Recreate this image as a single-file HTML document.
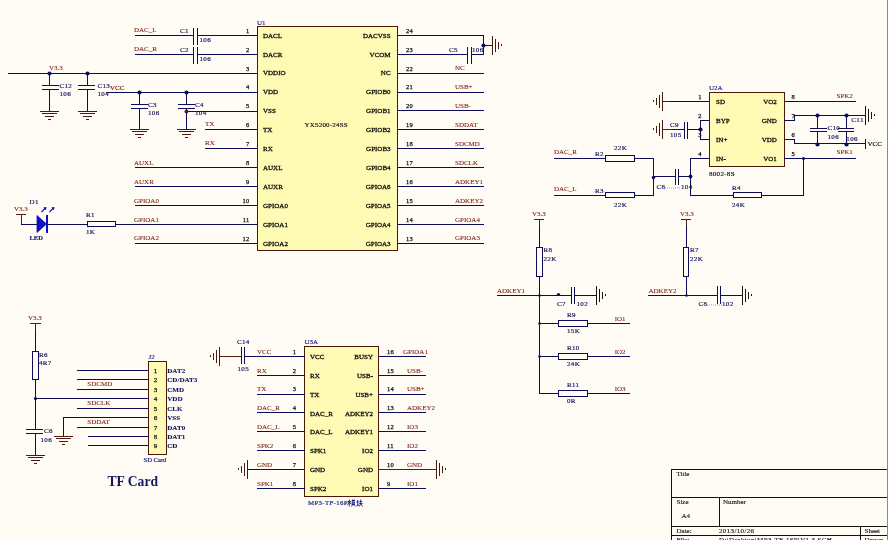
<!DOCTYPE html>
<html><head><meta charset="utf-8"><style>
html,body{margin:0;padding:0;background:#fffcf5;width:889px;height:540px;overflow:hidden}
svg{display:block;will-change:transform}
</style></head><body>
<svg width="889" height="540" viewBox="0 0 889 540" shape-rendering="auto">
<rect width="889" height="540" fill="#fffcf5"/>
<rect x="257" y="26" width="141" height="225" fill="#fffab4"/>
<rect x="257" y="26" width="141" height="1" fill="#4a1a08"/>
<rect x="257" y="250" width="141" height="1" fill="#4a1a08"/>
<rect x="257" y="26" width="1" height="225" fill="#4a1a08"/>
<rect x="397" y="26" width="1" height="225" fill="#4a1a08"/>
<text x="257" y="24.5" fill="#1a1a80" font-family='"Liberation Serif", serif' font-size="7" text-anchor="start" font-weight="normal" stroke="#1a1a80" stroke-width="0.15" >U1</text>
<text x="304.5" y="126.8" fill="#111" font-family='"Liberation Serif", serif' font-size="7" text-anchor="start" font-weight="normal" stroke="#111" stroke-width="0.18" letter-spacing="0.2">YX5200-24SS</text>
<text x="263" y="37.599999999999994" fill="#111" font-family='"Liberation Serif", serif' font-size="7" text-anchor="start" font-weight="normal" stroke="#111" stroke-width="0.3" >DACL</text>
<text x="390.6" y="37.599999999999994" fill="#111" font-family='"Liberation Serif", serif' font-size="7" text-anchor="end" font-weight="normal" stroke="#111" stroke-width="0.3" >DACVSS</text>
<text x="249.5" y="32.699999999999996" fill="#111" font-family='"Liberation Serif", serif' font-size="6.5" text-anchor="end" font-weight="normal" stroke="#111" stroke-width="0.25" letter-spacing="0.3">1</text>
<text x="406" y="32.699999999999996" fill="#111" font-family='"Liberation Serif", serif' font-size="6.5" text-anchor="start" font-weight="normal" stroke="#111" stroke-width="0.25" letter-spacing="0.3">24</text>
<text x="263" y="56.49999999999999" fill="#111" font-family='"Liberation Serif", serif' font-size="7" text-anchor="start" font-weight="normal" stroke="#111" stroke-width="0.3" >DACR</text>
<text x="390.6" y="56.49999999999999" fill="#111" font-family='"Liberation Serif", serif' font-size="7" text-anchor="end" font-weight="normal" stroke="#111" stroke-width="0.3" >VCOM</text>
<text x="249.5" y="51.599999999999994" fill="#111" font-family='"Liberation Serif", serif' font-size="6.5" text-anchor="end" font-weight="normal" stroke="#111" stroke-width="0.25" letter-spacing="0.3">2</text>
<text x="406" y="51.599999999999994" fill="#111" font-family='"Liberation Serif", serif' font-size="6.5" text-anchor="start" font-weight="normal" stroke="#111" stroke-width="0.25" letter-spacing="0.3">23</text>
<text x="263" y="75.39999999999999" fill="#111" font-family='"Liberation Serif", serif' font-size="7" text-anchor="start" font-weight="normal" stroke="#111" stroke-width="0.3" >VDDIO</text>
<text x="390.6" y="75.39999999999999" fill="#111" font-family='"Liberation Serif", serif' font-size="7" text-anchor="end" font-weight="normal" stroke="#111" stroke-width="0.3" >NC</text>
<text x="249.5" y="70.5" fill="#111" font-family='"Liberation Serif", serif' font-size="6.5" text-anchor="end" font-weight="normal" stroke="#111" stroke-width="0.25" letter-spacing="0.3">3</text>
<text x="406" y="70.5" fill="#111" font-family='"Liberation Serif", serif' font-size="6.5" text-anchor="start" font-weight="normal" stroke="#111" stroke-width="0.25" letter-spacing="0.3">22</text>
<text x="263" y="94.3" fill="#111" font-family='"Liberation Serif", serif' font-size="7" text-anchor="start" font-weight="normal" stroke="#111" stroke-width="0.3" >VDD</text>
<text x="390.6" y="94.3" fill="#111" font-family='"Liberation Serif", serif' font-size="7" text-anchor="end" font-weight="normal" stroke="#111" stroke-width="0.3" >GPIOB0</text>
<text x="249.5" y="89.4" fill="#111" font-family='"Liberation Serif", serif' font-size="6.5" text-anchor="end" font-weight="normal" stroke="#111" stroke-width="0.25" letter-spacing="0.3">4</text>
<text x="406" y="89.4" fill="#111" font-family='"Liberation Serif", serif' font-size="6.5" text-anchor="start" font-weight="normal" stroke="#111" stroke-width="0.25" letter-spacing="0.3">21</text>
<text x="263" y="113.19999999999999" fill="#111" font-family='"Liberation Serif", serif' font-size="7" text-anchor="start" font-weight="normal" stroke="#111" stroke-width="0.3" >VSS</text>
<text x="390.6" y="113.19999999999999" fill="#111" font-family='"Liberation Serif", serif' font-size="7" text-anchor="end" font-weight="normal" stroke="#111" stroke-width="0.3" >GPIOB1</text>
<text x="249.5" y="108.3" fill="#111" font-family='"Liberation Serif", serif' font-size="6.5" text-anchor="end" font-weight="normal" stroke="#111" stroke-width="0.25" letter-spacing="0.3">5</text>
<text x="406" y="108.3" fill="#111" font-family='"Liberation Serif", serif' font-size="6.5" text-anchor="start" font-weight="normal" stroke="#111" stroke-width="0.25" letter-spacing="0.3">20</text>
<text x="263" y="132.10000000000002" fill="#111" font-family='"Liberation Serif", serif' font-size="7" text-anchor="start" font-weight="normal" stroke="#111" stroke-width="0.3" >TX</text>
<text x="390.6" y="132.10000000000002" fill="#111" font-family='"Liberation Serif", serif' font-size="7" text-anchor="end" font-weight="normal" stroke="#111" stroke-width="0.3" >GPIOB2</text>
<text x="249.5" y="127.20000000000002" fill="#111" font-family='"Liberation Serif", serif' font-size="6.5" text-anchor="end" font-weight="normal" stroke="#111" stroke-width="0.25" letter-spacing="0.3">6</text>
<text x="406" y="127.20000000000002" fill="#111" font-family='"Liberation Serif", serif' font-size="6.5" text-anchor="start" font-weight="normal" stroke="#111" stroke-width="0.25" letter-spacing="0.3">19</text>
<text x="263" y="151.0" fill="#111" font-family='"Liberation Serif", serif' font-size="7" text-anchor="start" font-weight="normal" stroke="#111" stroke-width="0.3" >RX</text>
<text x="390.6" y="151.0" fill="#111" font-family='"Liberation Serif", serif' font-size="7" text-anchor="end" font-weight="normal" stroke="#111" stroke-width="0.3" >GPIOB3</text>
<text x="249.5" y="146.1" fill="#111" font-family='"Liberation Serif", serif' font-size="6.5" text-anchor="end" font-weight="normal" stroke="#111" stroke-width="0.25" letter-spacing="0.3">7</text>
<text x="406" y="146.1" fill="#111" font-family='"Liberation Serif", serif' font-size="6.5" text-anchor="start" font-weight="normal" stroke="#111" stroke-width="0.25" letter-spacing="0.3">18</text>
<text x="263" y="169.89999999999998" fill="#111" font-family='"Liberation Serif", serif' font-size="7" text-anchor="start" font-weight="normal" stroke="#111" stroke-width="0.3" >AUXL</text>
<text x="390.6" y="169.89999999999998" fill="#111" font-family='"Liberation Serif", serif' font-size="7" text-anchor="end" font-weight="normal" stroke="#111" stroke-width="0.3" >GPIOB4</text>
<text x="249.5" y="164.99999999999997" fill="#111" font-family='"Liberation Serif", serif' font-size="6.5" text-anchor="end" font-weight="normal" stroke="#111" stroke-width="0.25" letter-spacing="0.3">8</text>
<text x="406" y="164.99999999999997" fill="#111" font-family='"Liberation Serif", serif' font-size="6.5" text-anchor="start" font-weight="normal" stroke="#111" stroke-width="0.25" letter-spacing="0.3">17</text>
<text x="263" y="188.8" fill="#111" font-family='"Liberation Serif", serif' font-size="7" text-anchor="start" font-weight="normal" stroke="#111" stroke-width="0.3" >AUXR</text>
<text x="390.6" y="188.8" fill="#111" font-family='"Liberation Serif", serif' font-size="7" text-anchor="end" font-weight="normal" stroke="#111" stroke-width="0.3" >GPIOA6</text>
<text x="249.5" y="183.9" fill="#111" font-family='"Liberation Serif", serif' font-size="6.5" text-anchor="end" font-weight="normal" stroke="#111" stroke-width="0.25" letter-spacing="0.3">9</text>
<text x="406" y="183.9" fill="#111" font-family='"Liberation Serif", serif' font-size="6.5" text-anchor="start" font-weight="normal" stroke="#111" stroke-width="0.25" letter-spacing="0.3">16</text>
<text x="263" y="207.7" fill="#111" font-family='"Liberation Serif", serif' font-size="7" text-anchor="start" font-weight="normal" stroke="#111" stroke-width="0.3" >GPIOA0</text>
<text x="390.6" y="207.7" fill="#111" font-family='"Liberation Serif", serif' font-size="7" text-anchor="end" font-weight="normal" stroke="#111" stroke-width="0.3" >GPIOA5</text>
<text x="249.5" y="202.79999999999998" fill="#111" font-family='"Liberation Serif", serif' font-size="6.5" text-anchor="end" font-weight="normal" stroke="#111" stroke-width="0.25" letter-spacing="0.3">10</text>
<text x="406" y="202.79999999999998" fill="#111" font-family='"Liberation Serif", serif' font-size="6.5" text-anchor="start" font-weight="normal" stroke="#111" stroke-width="0.25" letter-spacing="0.3">15</text>
<text x="263" y="226.60000000000002" fill="#111" font-family='"Liberation Serif", serif' font-size="7" text-anchor="start" font-weight="normal" stroke="#111" stroke-width="0.3" >GPIOA1</text>
<text x="390.6" y="226.60000000000002" fill="#111" font-family='"Liberation Serif", serif' font-size="7" text-anchor="end" font-weight="normal" stroke="#111" stroke-width="0.3" >GPIOA4</text>
<text x="249.5" y="221.70000000000002" fill="#111" font-family='"Liberation Serif", serif' font-size="6.5" text-anchor="end" font-weight="normal" stroke="#111" stroke-width="0.25" letter-spacing="0.3">11</text>
<text x="406" y="221.70000000000002" fill="#111" font-family='"Liberation Serif", serif' font-size="6.5" text-anchor="start" font-weight="normal" stroke="#111" stroke-width="0.25" letter-spacing="0.3">14</text>
<text x="263" y="245.5" fill="#111" font-family='"Liberation Serif", serif' font-size="7" text-anchor="start" font-weight="normal" stroke="#111" stroke-width="0.3" >GPIOA2</text>
<text x="390.6" y="245.5" fill="#111" font-family='"Liberation Serif", serif' font-size="7" text-anchor="end" font-weight="normal" stroke="#111" stroke-width="0.3" >GPIOA3</text>
<text x="249.5" y="240.6" fill="#111" font-family='"Liberation Serif", serif' font-size="6.5" text-anchor="end" font-weight="normal" stroke="#111" stroke-width="0.25" letter-spacing="0.3">12</text>
<text x="406" y="240.6" fill="#111" font-family='"Liberation Serif", serif' font-size="6.5" text-anchor="start" font-weight="normal" stroke="#111" stroke-width="0.25" letter-spacing="0.3">13</text>
<rect x="197" y="35" width="61" height="1" fill="#0c0c5a"/>
<rect x="135" y="35" width="59" height="1" fill="#0c0c5a"/>
<rect x="197" y="54" width="61" height="1" fill="#0c0c5a"/>
<rect x="135" y="54" width="59" height="1" fill="#0c0c5a"/>
<rect x="8" y="73" width="250" height="1" fill="#0c0c5a"/>
<rect x="106" y="92" width="152" height="1" fill="#0c0c5a"/>
<rect x="186" y="111" width="72" height="1" fill="#0c0c5a"/>
<rect x="205" y="129" width="53" height="1" fill="#0c0c5a"/>
<rect x="205" y="148" width="53" height="1" fill="#0c0c5a"/>
<rect x="135" y="167" width="123" height="1" fill="#0c0c5a"/>
<text x="134" y="164.79999999999998" fill="#7a1a0a" font-family='"Liberation Serif", serif' font-size="7" text-anchor="start" font-weight="normal" stroke="#7a1a0a" stroke-width="0.2" stroke-opacity="0.4">AUXL</text>
<rect x="135" y="186" width="123" height="1" fill="#0c0c5a"/>
<text x="134" y="183.70000000000002" fill="#7a1a0a" font-family='"Liberation Serif", serif' font-size="7" text-anchor="start" font-weight="normal" stroke="#7a1a0a" stroke-width="0.2" stroke-opacity="0.4">AUXR</text>
<rect x="135" y="205" width="123" height="1" fill="#0c0c5a"/>
<text x="134" y="202.6" fill="#7a1a0a" font-family='"Liberation Serif", serif' font-size="7" text-anchor="start" font-weight="normal" stroke="#7a1a0a" stroke-width="0.2" stroke-opacity="0.4">GPIOA0</text>
<rect x="135" y="224" width="123" height="1" fill="#0c0c5a"/>
<text x="134" y="221.50000000000003" fill="#7a1a0a" font-family='"Liberation Serif", serif' font-size="7" text-anchor="start" font-weight="normal" stroke="#7a1a0a" stroke-width="0.2" stroke-opacity="0.4">GPIOA1</text>
<rect x="135" y="243" width="123" height="1" fill="#0c0c5a"/>
<text x="134" y="240.4" fill="#7a1a0a" font-family='"Liberation Serif", serif' font-size="7" text-anchor="start" font-weight="normal" stroke="#7a1a0a" stroke-width="0.2" stroke-opacity="0.4">GPIOA2</text>
<text x="134" y="32.4" fill="#7a1a0a" font-family='"Liberation Serif", serif' font-size="7" text-anchor="start" font-weight="normal" stroke="#7a1a0a" stroke-width="0.2" stroke-opacity="0.4">DAC_L</text>
<text x="134" y="51.4" fill="#7a1a0a" font-family='"Liberation Serif", serif' font-size="7" text-anchor="start" font-weight="normal" stroke="#7a1a0a" stroke-width="0.2" stroke-opacity="0.4">DAC_R</text>
<rect x="193" y="28" width="1" height="17" fill="#0c0c5a"/>
<rect x="197" y="28" width="1" height="17" fill="#0c0c5a"/>
<rect x="193" y="47" width="1" height="17" fill="#0c0c5a"/>
<rect x="197" y="47" width="1" height="17" fill="#0c0c5a"/>
<text x="180" y="32.6" fill="#16165c" font-family='"Liberation Serif", serif' font-size="7" text-anchor="start" font-weight="normal" stroke="#16165c" stroke-width="0.18" letter-spacing="0.35">C1</text>
<text x="199.5" y="41.6" fill="#16165c" font-family='"Liberation Serif", serif' font-size="7" text-anchor="start" font-weight="normal" stroke="#16165c" stroke-width="0.18" letter-spacing="0.35">106</text>
<text x="180" y="51.6" fill="#16165c" font-family='"Liberation Serif", serif' font-size="7" text-anchor="start" font-weight="normal" stroke="#16165c" stroke-width="0.18" letter-spacing="0.35">C2</text>
<text x="199.5" y="60.6" fill="#16165c" font-family='"Liberation Serif", serif' font-size="7" text-anchor="start" font-weight="normal" stroke="#16165c" stroke-width="0.18" letter-spacing="0.35">106</text>
<text x="205" y="126.4" fill="#7a1a0a" font-family='"Liberation Serif", serif' font-size="7" text-anchor="start" font-weight="normal" stroke="#7a1a0a" stroke-width="0.2" stroke-opacity="0.4">TX</text>
<text x="205" y="145.4" fill="#7a1a0a" font-family='"Liberation Serif", serif' font-size="7" text-anchor="start" font-weight="normal" stroke="#7a1a0a" stroke-width="0.2" stroke-opacity="0.4">RX</text>
<text x="49" y="70.2" fill="#7a1a0a" font-family='"Liberation Serif", serif' font-size="7" text-anchor="start" font-weight="normal" stroke="#7a1a0a" stroke-width="0.2" stroke-opacity="0.4">V3.3</text>
<circle cx="49.5" cy="73.5" r="2.1" fill="#0c0c5a"/>
<rect x="49" y="73" width="1" height="13" fill="#0c0c5a"/>
<rect x="42" y="85" width="17" height="1" fill="#0c0c5a"/>
<rect x="42" y="89" width="17" height="1" fill="#0c0c5a"/>
<rect x="49" y="89" width="1" height="23" fill="#0c0c5a"/>
<rect x="40" y="111" width="19" height="1" fill="#4a1a10"/>
<rect x="42" y="113" width="15" height="1" fill="#4a1a10"/>
<rect x="45" y="116" width="9" height="1" fill="#4a1a10"/>
<rect x="48" y="119" width="3" height="1" fill="#4a1a10"/>
<text x="59.5" y="87.6" fill="#16165c" font-family='"Liberation Serif", serif' font-size="7" text-anchor="start" font-weight="normal" stroke="#16165c" stroke-width="0.18" letter-spacing="0.35">C12</text>
<text x="59.5" y="95.8" fill="#16165c" font-family='"Liberation Serif", serif' font-size="7" text-anchor="start" font-weight="normal" stroke="#16165c" stroke-width="0.18" letter-spacing="0.35">106</text>
<circle cx="87.5" cy="73.5" r="2.1" fill="#0c0c5a"/>
<rect x="87" y="73" width="1" height="13" fill="#0c0c5a"/>
<rect x="78" y="85" width="17" height="1" fill="#0c0c5a"/>
<rect x="78" y="89" width="17" height="1" fill="#0c0c5a"/>
<rect x="87" y="89" width="1" height="23" fill="#0c0c5a"/>
<rect x="78" y="111" width="19" height="1" fill="#4a1a10"/>
<rect x="80" y="113" width="15" height="1" fill="#4a1a10"/>
<rect x="83" y="116" width="9" height="1" fill="#4a1a10"/>
<rect x="86" y="119" width="3" height="1" fill="#4a1a10"/>
<text x="97.5" y="87.6" fill="#16165c" font-family='"Liberation Serif", serif' font-size="7" text-anchor="start" font-weight="normal" stroke="#16165c" stroke-width="0.18" letter-spacing="0.35">C13</text>
<text x="97.5" y="95.8" fill="#16165c" font-family='"Liberation Serif", serif' font-size="7" text-anchor="start" font-weight="normal" stroke="#16165c" stroke-width="0.18" letter-spacing="0.35">104</text>
<text x="110" y="90" fill="#7a1a0a" font-family='"Liberation Serif", serif' font-size="7" text-anchor="start" font-weight="normal" stroke="#7a1a0a" stroke-width="0.2" >VCC</text>
<circle cx="139.5" cy="92.5" r="2.1" fill="#0c0c5a"/>
<rect x="139" y="92" width="1" height="13" fill="#0c0c5a"/>
<rect x="131" y="104" width="17" height="1" fill="#0c0c5a"/>
<rect x="131" y="108" width="17" height="1" fill="#0c0c5a"/>
<rect x="139" y="108" width="1" height="22" fill="#0c0c5a"/>
<rect x="130" y="129" width="19" height="1" fill="#4a1a10"/>
<rect x="132" y="131" width="15" height="1" fill="#4a1a10"/>
<rect x="135" y="134" width="9" height="1" fill="#4a1a10"/>
<rect x="138" y="137" width="3" height="1" fill="#4a1a10"/>
<text x="148" y="106.6" fill="#16165c" font-family='"Liberation Serif", serif' font-size="7" text-anchor="start" font-weight="normal" stroke="#16165c" stroke-width="0.18" letter-spacing="0.35">C3</text>
<text x="148" y="114.6" fill="#16165c" font-family='"Liberation Serif", serif' font-size="7" text-anchor="start" font-weight="normal" stroke="#16165c" stroke-width="0.18" letter-spacing="0.35">106</text>
<circle cx="186.5" cy="92.5" r="2.1" fill="#0c0c5a"/>
<rect x="186" y="92" width="1" height="13" fill="#0c0c5a"/>
<rect x="178" y="104" width="17" height="1" fill="#0c0c5a"/>
<rect x="178" y="108" width="17" height="1" fill="#0c0c5a"/>
<rect x="186" y="108" width="1" height="22" fill="#0c0c5a"/>
<rect x="177" y="129" width="19" height="1" fill="#4a1a10"/>
<rect x="179" y="131" width="15" height="1" fill="#4a1a10"/>
<rect x="182" y="134" width="9" height="1" fill="#4a1a10"/>
<rect x="185" y="137" width="3" height="1" fill="#4a1a10"/>
<text x="195" y="106.6" fill="#16165c" font-family='"Liberation Serif", serif' font-size="7" text-anchor="start" font-weight="normal" stroke="#16165c" stroke-width="0.18" letter-spacing="0.35">C4</text>
<text x="195" y="114.6" fill="#16165c" font-family='"Liberation Serif", serif' font-size="7" text-anchor="start" font-weight="normal" stroke="#16165c" stroke-width="0.18" letter-spacing="0.35">104</text>
<circle cx="186.5" cy="111.5" r="2.0" fill="#5a1a10"/>
<rect x="397" y="35" width="87" height="1" fill="#0c0c5a"/>
<rect x="397" y="54" width="71" height="1" fill="#0c0c5a"/>
<rect x="471" y="54" width="13" height="1" fill="#0c0c5a"/>
<rect x="397" y="73" width="87" height="1" fill="#0c0c5a"/>
<rect x="397" y="92" width="87" height="1" fill="#0c0c5a"/>
<rect x="397" y="110" width="87" height="1" fill="#0c0c5a"/>
<rect x="397" y="129" width="87" height="1" fill="#0c0c5a"/>
<rect x="397" y="148" width="87" height="1" fill="#0c0c5a"/>
<rect x="397" y="167" width="87" height="1" fill="#0c0c5a"/>
<rect x="397" y="186" width="87" height="1" fill="#0c0c5a"/>
<rect x="397" y="205" width="87" height="1" fill="#0c0c5a"/>
<rect x="397" y="224" width="87" height="1" fill="#0c0c5a"/>
<rect x="397" y="243" width="87" height="1" fill="#0c0c5a"/>
<rect x="483" y="35" width="1" height="20" fill="#0c0c5a"/>
<circle cx="483.5" cy="45.5" r="2.1" fill="#0c0c5a"/>
<rect x="483" y="45" width="10" height="1" fill="#0c0c5a"/>
<rect x="492" y="36" width="1" height="19" fill="#4a1a10"/>
<rect x="495" y="39" width="1" height="13" fill="#4a1a10"/>
<rect x="498" y="42" width="1" height="7" fill="#4a1a10"/>
<rect x="501" y="44" width="1" height="2" fill="#4a1a10"/>
<rect x="467" y="47" width="1" height="17" fill="#0c0c5a"/>
<rect x="471" y="47" width="1" height="17" fill="#0c0c5a"/>
<text x="449" y="51.6" fill="#16165c" font-family='"Liberation Serif", serif' font-size="7" text-anchor="start" font-weight="normal" stroke="#16165c" stroke-width="0.18" letter-spacing="0.35">C5</text>
<text x="472" y="51.6" fill="#16165c" font-family='"Liberation Serif", serif' font-size="7" text-anchor="start" font-weight="normal" stroke="#16165c" stroke-width="0.18" letter-spacing="0.35">106</text>
<text x="455" y="70.3" fill="#7a1a0a" font-family='"Liberation Serif", serif' font-size="7" text-anchor="start" font-weight="normal" stroke="#7a1a0a" stroke-width="0.2" stroke-opacity="0.4">NC</text>
<text x="455" y="89.2" fill="#7a1a0a" font-family='"Liberation Serif", serif' font-size="7" text-anchor="start" font-weight="normal" stroke="#7a1a0a" stroke-width="0.2" stroke-opacity="0.4">USB+</text>
<text x="455" y="108.1" fill="#7a1a0a" font-family='"Liberation Serif", serif' font-size="7" text-anchor="start" font-weight="normal" stroke="#7a1a0a" stroke-width="0.2" stroke-opacity="0.4">USB-</text>
<text x="455" y="127.00000000000001" fill="#7a1a0a" font-family='"Liberation Serif", serif' font-size="7" text-anchor="start" font-weight="normal" stroke="#7a1a0a" stroke-width="0.2" stroke-opacity="0.4">SDDAT</text>
<text x="455" y="145.9" fill="#7a1a0a" font-family='"Liberation Serif", serif' font-size="7" text-anchor="start" font-weight="normal" stroke="#7a1a0a" stroke-width="0.2" stroke-opacity="0.4">SDCMD</text>
<text x="455" y="164.79999999999998" fill="#7a1a0a" font-family='"Liberation Serif", serif' font-size="7" text-anchor="start" font-weight="normal" stroke="#7a1a0a" stroke-width="0.2" stroke-opacity="0.4">SDCLK</text>
<text x="455" y="183.70000000000002" fill="#7a1a0a" font-family='"Liberation Serif", serif' font-size="7" text-anchor="start" font-weight="normal" stroke="#7a1a0a" stroke-width="0.2" stroke-opacity="0.4">ADKEY1</text>
<text x="455" y="202.6" fill="#7a1a0a" font-family='"Liberation Serif", serif' font-size="7" text-anchor="start" font-weight="normal" stroke="#7a1a0a" stroke-width="0.2" stroke-opacity="0.4">ADKEY2</text>
<text x="455" y="221.50000000000003" fill="#7a1a0a" font-family='"Liberation Serif", serif' font-size="7" text-anchor="start" font-weight="normal" stroke="#7a1a0a" stroke-width="0.2" stroke-opacity="0.4">GPIOA4</text>
<text x="455" y="240.4" fill="#7a1a0a" font-family='"Liberation Serif", serif' font-size="7" text-anchor="start" font-weight="normal" stroke="#7a1a0a" stroke-width="0.2" stroke-opacity="0.4">GPIOA3</text>
<text x="14" y="211.4" fill="#7a1a0a" font-family='"Liberation Serif", serif' font-size="7" text-anchor="start" font-weight="normal" stroke="#7a1a0a" stroke-width="0.2" stroke-opacity="0.4">V3.3</text>
<rect x="16" y="214" width="10" height="1" fill="#5a1a10"/>
<rect x="21" y="214" width="1" height="11" fill="#5a1a10"/>
<rect x="21" y="224" width="17" height="1" fill="#0c0c5a"/>
<polygon points="37,215.5 37,232.5 46.5,224" fill="#1010c0" stroke="#1010c0" stroke-width="0.8"/>
<rect x="46" y="215" width="2" height="18" fill="#1010c0"/>
<line x1="41.5" y1="212" x2="45.5" y2="208" stroke="#1010c0" stroke-width="1.1"/>
<polygon points="46.5,207 43.3,207.6 45.9,210.2" fill="#1010c0"/>
<line x1="49.5" y1="212" x2="53.5" y2="208" stroke="#1010c0" stroke-width="1.1"/>
<polygon points="54.5,207 51.3,207.6 53.9,210.2" fill="#1010c0"/>
<text x="29.5" y="203.6" fill="#16165c" font-family='"Liberation Serif", serif' font-size="7" text-anchor="start" font-weight="normal" stroke="#16165c" stroke-width="0.18" letter-spacing="0.35">D1</text>
<text x="29.5" y="240.2" fill="#1a1a80" font-family='"Liberation Serif", serif' font-size="6.5" text-anchor="start" font-weight="bold" stroke="#1a1a80" stroke-width="0.2" >LED</text>
<rect x="47" y="224" width="41" height="1" fill="#0c0c5a"/>
<rect x="87" y="221" width="29" height="1" fill="#0c0c5a"/>
<rect x="87" y="226" width="29" height="1" fill="#0c0c5a"/>
<rect x="87" y="221" width="1" height="6" fill="#0c0c5a"/>
<rect x="115" y="221" width="1" height="6" fill="#0c0c5a"/>
<rect x="115" y="224" width="143" height="1" fill="#0c0c5a"/>
<text x="86" y="217.1" fill="#16165c" font-family='"Liberation Serif", serif' font-size="7" text-anchor="start" font-weight="normal" stroke="#16165c" stroke-width="0.18" letter-spacing="0.35">R1</text>
<text x="86" y="234.1" fill="#16165c" font-family='"Liberation Serif", serif' font-size="7" text-anchor="start" font-weight="normal" stroke="#16165c" stroke-width="0.18" letter-spacing="0.35">1K</text>
<rect x="709" y="92" width="76" height="75" fill="#fffab4"/>
<rect x="709" y="92" width="76" height="1" fill="#4a1a08"/>
<rect x="709" y="166" width="76" height="1" fill="#4a1a08"/>
<rect x="709" y="92" width="1" height="75" fill="#4a1a08"/>
<rect x="784" y="92" width="1" height="75" fill="#4a1a08"/>
<text x="709" y="90" fill="#1a1a80" font-family='"Liberation Serif", serif' font-size="7" text-anchor="start" font-weight="normal" stroke="#1a1a80" stroke-width="0.15" >U2A</text>
<text x="709" y="175.5" fill="#111" font-family='"Liberation Serif", serif' font-size="7" text-anchor="start" font-weight="normal" stroke="#111" stroke-width="0.2" letter-spacing="0.3">8002-8S</text>
<text x="716" y="104.1" fill="#111" font-family='"Liberation Serif", serif' font-size="7" text-anchor="start" font-weight="normal" stroke="#111" stroke-width="0.3" >SD</text>
<text x="776.8" y="104.1" fill="#111" font-family='"Liberation Serif", serif' font-size="7" text-anchor="end" font-weight="normal" stroke="#111" stroke-width="0.3" >VO2</text>
<text x="701.5" y="98.8" fill="#111" font-family='"Liberation Serif", serif' font-size="6.5" text-anchor="end" font-weight="normal" stroke="#111" stroke-width="0.25" >1</text>
<text x="791.5" y="98.8" fill="#111" font-family='"Liberation Serif", serif' font-size="6.5" text-anchor="start" font-weight="normal" stroke="#111" stroke-width="0.25" >8</text>
<text x="716" y="123.1" fill="#111" font-family='"Liberation Serif", serif' font-size="7" text-anchor="start" font-weight="normal" stroke="#111" stroke-width="0.3" >BYP</text>
<text x="776.8" y="123.1" fill="#111" font-family='"Liberation Serif", serif' font-size="7" text-anchor="end" font-weight="normal" stroke="#111" stroke-width="0.3" >GND</text>
<text x="701.5" y="117.8" fill="#111" font-family='"Liberation Serif", serif' font-size="6.5" text-anchor="end" font-weight="normal" stroke="#111" stroke-width="0.25" >2</text>
<text x="791.5" y="117.8" fill="#111" font-family='"Liberation Serif", serif' font-size="6.5" text-anchor="start" font-weight="normal" stroke="#111" stroke-width="0.25" >7</text>
<text x="716" y="142.0" fill="#111" font-family='"Liberation Serif", serif' font-size="7" text-anchor="start" font-weight="normal" stroke="#111" stroke-width="0.3" >IN+</text>
<text x="776.8" y="142.0" fill="#111" font-family='"Liberation Serif", serif' font-size="7" text-anchor="end" font-weight="normal" stroke="#111" stroke-width="0.3" >VDD</text>
<text x="701.5" y="136.70000000000002" fill="#111" font-family='"Liberation Serif", serif' font-size="6.5" text-anchor="end" font-weight="normal" stroke="#111" stroke-width="0.25" >3</text>
<text x="791.5" y="136.70000000000002" fill="#111" font-family='"Liberation Serif", serif' font-size="6.5" text-anchor="start" font-weight="normal" stroke="#111" stroke-width="0.25" >6</text>
<text x="716" y="160.9" fill="#111" font-family='"Liberation Serif", serif' font-size="7" text-anchor="start" font-weight="normal" stroke="#111" stroke-width="0.3" >IN-</text>
<text x="776.8" y="160.9" fill="#111" font-family='"Liberation Serif", serif' font-size="7" text-anchor="end" font-weight="normal" stroke="#111" stroke-width="0.3" >VO1</text>
<text x="701.5" y="155.60000000000002" fill="#111" font-family='"Liberation Serif", serif' font-size="6.5" text-anchor="end" font-weight="normal" stroke="#111" stroke-width="0.25" >4</text>
<text x="791.5" y="155.60000000000002" fill="#111" font-family='"Liberation Serif", serif' font-size="6.5" text-anchor="start" font-weight="normal" stroke="#111" stroke-width="0.25" >5</text>
<rect x="662" y="101" width="9" height="1" fill="#5a1a10"/>
<rect x="670" y="101" width="40" height="1" fill="#0c0c5a"/>
<rect x="662" y="92" width="1" height="19" fill="#4a1a10"/>
<rect x="659" y="95" width="1" height="13" fill="#4a1a10"/>
<rect x="656" y="98" width="1" height="7" fill="#4a1a10"/>
<rect x="653" y="100" width="1" height="2" fill="#4a1a10"/>
<rect x="700" y="120" width="10" height="1" fill="#0c0c5a"/>
<rect x="700" y="120" width="1" height="20" fill="#0c0c5a"/>
<rect x="700" y="139" width="10" height="1" fill="#0c0c5a"/>
<circle cx="700.5" cy="129.5" r="2.1" fill="#0c0c5a"/>
<rect x="662" y="129" width="11" height="1" fill="#5a1a10"/>
<rect x="672" y="129" width="13" height="1" fill="#0c0c5a"/>
<rect x="662" y="120" width="1" height="19" fill="#4a1a10"/>
<rect x="659" y="123" width="1" height="13" fill="#4a1a10"/>
<rect x="656" y="126" width="1" height="7" fill="#4a1a10"/>
<rect x="653" y="128" width="1" height="2" fill="#4a1a10"/>
<rect x="684" y="122" width="1" height="17" fill="#0c0c5a"/>
<rect x="687" y="122" width="1" height="17" fill="#0c0c5a"/>
<rect x="687" y="129" width="14" height="1" fill="#0c0c5a"/>
<text x="670" y="126.6" fill="#16165c" font-family='"Liberation Serif", serif' font-size="7" text-anchor="start" font-weight="normal" stroke="#16165c" stroke-width="0.18" letter-spacing="0.35">C9</text>
<text x="670" y="136.6" fill="#16165c" font-family='"Liberation Serif", serif' font-size="7" text-anchor="start" font-weight="normal" stroke="#16165c" stroke-width="0.18" letter-spacing="0.35">105</text>
<rect x="690" y="158" width="20" height="1" fill="#0c0c5a"/>
<rect x="690" y="158" width="1" height="38" fill="#0c0c5a"/>
<rect x="690" y="195" width="44" height="1" fill="#0c0c5a"/>
<rect x="733" y="192" width="29" height="1" fill="#0c0c5a"/>
<rect x="733" y="197" width="29" height="1" fill="#0c0c5a"/>
<rect x="733" y="192" width="1" height="6" fill="#0c0c5a"/>
<rect x="761" y="192" width="1" height="6" fill="#0c0c5a"/>
<rect x="761" y="195" width="43" height="1" fill="#0c0c5a"/>
<rect x="803" y="158" width="1" height="38" fill="#0c0c5a"/>
<circle cx="803.5" cy="158.5" r="1.5" fill="#0c0c5a"/>
<circle cx="690.5" cy="176.5" r="1.9" fill="#0c0c5a"/>
<rect x="653" y="176" width="23" height="1" fill="#0c0c5a"/>
<rect x="675" y="169" width="1" height="16" fill="#0c0c5a"/>
<rect x="678" y="169" width="1" height="16" fill="#0c0c5a"/>
<rect x="678" y="176" width="13" height="1" fill="#0c0c5a"/>
<circle cx="653.5" cy="177.5" r="1.8" fill="#0c0c5a"/>
<line x1="665" y1="188" x2="681" y2="188" stroke="#b08060" stroke-width="0.8" stroke-dasharray="1,1"/>
<text x="656.5" y="188.6" fill="#16165c" font-family='"Liberation Serif", serif' font-size="7" text-anchor="start" font-weight="normal" stroke="#16165c" stroke-width="0.18" letter-spacing="0.35">C8</text>
<text x="681" y="188.6" fill="#16165c" font-family='"Liberation Serif", serif' font-size="7" text-anchor="start" font-weight="normal" stroke="#16165c" stroke-width="0.18" letter-spacing="0.35">104</text>
<text x="732" y="189.6" fill="#16165c" font-family='"Liberation Serif", serif' font-size="7" text-anchor="start" font-weight="normal" stroke="#16165c" stroke-width="0.18" letter-spacing="0.35">R4</text>
<text x="732" y="206.6" fill="#16165c" font-family='"Liberation Serif", serif' font-size="7" text-anchor="start" font-weight="normal" stroke="#16165c" stroke-width="0.18" letter-spacing="0.35">24K</text>
<rect x="554" y="158" width="52" height="1" fill="#0c0c5a"/>
<rect x="605" y="155" width="30" height="1" fill="#0c0c5a"/>
<rect x="605" y="161" width="30" height="1" fill="#0c0c5a"/>
<rect x="605" y="155" width="1" height="7" fill="#0c0c5a"/>
<rect x="634" y="155" width="1" height="7" fill="#0c0c5a"/>
<rect x="634" y="158" width="20" height="1" fill="#0c0c5a"/>
<rect x="653" y="158" width="1" height="38" fill="#0c0c5a"/>
<rect x="634" y="195" width="20" height="1" fill="#0c0c5a"/>
<rect x="554" y="195" width="52" height="1" fill="#0c0c5a"/>
<rect x="605" y="192" width="30" height="1" fill="#0c0c5a"/>
<rect x="605" y="197" width="30" height="1" fill="#0c0c5a"/>
<rect x="605" y="192" width="1" height="6" fill="#0c0c5a"/>
<rect x="634" y="192" width="1" height="6" fill="#0c0c5a"/>
<text x="554" y="154.4" fill="#7a1a0a" font-family='"Liberation Serif", serif' font-size="7" text-anchor="start" font-weight="normal" stroke="#7a1a0a" stroke-width="0.2" stroke-opacity="0.4">DAC_R</text>
<text x="554" y="191.4" fill="#7a1a0a" font-family='"Liberation Serif", serif' font-size="7" text-anchor="start" font-weight="normal" stroke="#7a1a0a" stroke-width="0.2" stroke-opacity="0.4">DAC_L</text>
<text x="595" y="156.1" fill="#16165c" font-family='"Liberation Serif", serif' font-size="7" text-anchor="start" font-weight="normal" stroke="#16165c" stroke-width="0.18" letter-spacing="0.35">R2</text>
<text x="614" y="149.6" fill="#16165c" font-family='"Liberation Serif", serif' font-size="7" text-anchor="start" font-weight="normal" stroke="#16165c" stroke-width="0.18" letter-spacing="0.35">22K</text>
<text x="595" y="193.1" fill="#16165c" font-family='"Liberation Serif", serif' font-size="7" text-anchor="start" font-weight="normal" stroke="#16165c" stroke-width="0.18" letter-spacing="0.35">R3</text>
<text x="614" y="206.6" fill="#16165c" font-family='"Liberation Serif", serif' font-size="7" text-anchor="start" font-weight="normal" stroke="#16165c" stroke-width="0.18" letter-spacing="0.35">22K</text>
<rect x="784" y="101" width="72" height="1" fill="#0c0c5a"/>
<text x="836.5" y="98.2" fill="#7a1a0a" font-family='"Liberation Serif", serif' font-size="7" text-anchor="start" font-weight="normal" stroke="#7a1a0a" stroke-width="0.2" stroke-opacity="0.4">SPK2</text>
<rect x="784" y="120" width="11" height="1" fill="#0c0c5a"/>
<rect x="794" y="115" width="1" height="6" fill="#0c0c5a"/>
<rect x="794" y="115" width="72" height="1" fill="#0c0c5a"/>
<rect x="865" y="106" width="1" height="19" fill="#141414"/>
<rect x="868" y="109" width="1" height="13" fill="#141414"/>
<rect x="871" y="112" width="1" height="7" fill="#141414"/>
<rect x="874" y="114" width="1" height="2" fill="#141414"/>
<rect x="784" y="139" width="11" height="1" fill="#0c0c5a"/>
<rect x="794" y="139" width="1" height="5" fill="#0c0c5a"/>
<rect x="794" y="143" width="72" height="1" fill="#0c0c5a"/>
<rect x="865" y="139" width="1" height="10" fill="#111"/>
<text x="867.5" y="146" fill="#111" font-family='"Liberation Serif", serif' font-size="7" text-anchor="start" font-weight="normal" stroke="#111" stroke-width="0.2" >VCC</text>
<rect x="784" y="158" width="72" height="1" fill="#0c0c5a"/>
<text x="836.5" y="154.4" fill="#7a1a0a" font-family='"Liberation Serif", serif' font-size="7" text-anchor="start" font-weight="normal" stroke="#7a1a0a" stroke-width="0.2" stroke-opacity="0.4">SPK1</text>
<circle cx="817.5" cy="115.5" r="2.1" fill="#0c0c5a"/>
<circle cx="817.5" cy="144.5" r="2.1" fill="#0c0c5a"/>
<rect x="817" y="115" width="1" height="14" fill="#0c0c5a"/>
<rect x="817" y="131" width="1" height="13" fill="#0c0c5a"/>
<rect x="810" y="128" width="17" height="1" fill="#0c0c5a"/>
<rect x="810" y="131" width="17" height="1" fill="#0c0c5a"/>
<circle cx="846.5" cy="115.5" r="2.1" fill="#0c0c5a"/>
<circle cx="846.5" cy="144.5" r="2.1" fill="#0c0c5a"/>
<rect x="846" y="115" width="1" height="14" fill="#0c0c5a"/>
<rect x="846" y="131" width="1" height="13" fill="#0c0c5a"/>
<rect x="838" y="128" width="16" height="1" fill="#0c0c5a"/>
<rect x="838" y="131" width="16" height="1" fill="#0c0c5a"/>
<text x="827.5" y="129.6" fill="#16165c" font-family='"Liberation Serif", serif' font-size="7" text-anchor="start" font-weight="normal" stroke="#16165c" stroke-width="0.18" letter-spacing="0.35">C10</text>
<text x="827.5" y="138.6" fill="#16165c" font-family='"Liberation Serif", serif' font-size="7" text-anchor="start" font-weight="normal" stroke="#16165c" stroke-width="0.18" letter-spacing="0.35">106</text>
<text x="851.3" y="121.6" fill="#16165c" font-family='"Liberation Serif", serif' font-size="7" text-anchor="start" font-weight="normal" stroke="#16165c" stroke-width="0.18" letter-spacing="0.35">C11</text>
<text x="846.3" y="140.6" fill="#16165c" font-family='"Liberation Serif", serif' font-size="7" text-anchor="start" font-weight="normal" stroke="#16165c" stroke-width="0.18" letter-spacing="0.35">106</text>
<text x="532" y="216.4" fill="#7a1a0a" font-family='"Liberation Serif", serif' font-size="7" text-anchor="start" font-weight="normal" stroke="#7a1a0a" stroke-width="0.2" stroke-opacity="0.4">V3.3</text>
<rect x="534" y="219" width="10" height="1" fill="#5a1a10"/>
<rect x="539" y="219" width="1" height="8" fill="#5a1a10"/>
<rect x="539" y="226" width="1" height="22" fill="#0c0c5a"/>
<rect x="536" y="247" width="7" height="1" fill="#0c0c5a"/>
<rect x="536" y="276" width="7" height="1" fill="#0c0c5a"/>
<rect x="536" y="247" width="1" height="30" fill="#0c0c5a"/>
<rect x="542" y="247" width="1" height="30" fill="#0c0c5a"/>
<rect x="539" y="276" width="1" height="118" fill="#0c0c5a"/>
<text x="543.5" y="252.1" fill="#16165c" font-family='"Liberation Serif", serif' font-size="7" text-anchor="start" font-weight="normal" stroke="#16165c" stroke-width="0.18" letter-spacing="0.35">R8</text>
<text x="543.5" y="260.6" fill="#16165c" font-family='"Liberation Serif", serif' font-size="7" text-anchor="start" font-weight="normal" stroke="#16165c" stroke-width="0.18" letter-spacing="0.35">22K</text>
<text x="497" y="292.59999999999997" fill="#7a1a0a" font-family='"Liberation Serif", serif' font-size="7" text-anchor="start" font-weight="normal" stroke="#7a1a0a" stroke-width="0.2" stroke-opacity="0.4">ADKEY1</text>
<rect x="497" y="295" width="75" height="1" fill="#0c0c5a"/>
<circle cx="539.5" cy="295.5" r="1.3" fill="#0c0c5a"/>
<circle cx="558.5" cy="294.5" r="1.6" fill="#0c0c5a"/>
<rect x="571" y="287" width="1" height="17" fill="#0c0c5a"/>
<rect x="574" y="287" width="1" height="17" fill="#0c0c5a"/>
<rect x="574" y="295" width="23" height="1" fill="#0c0c5a"/>
<rect x="596" y="286" width="1" height="19" fill="#141414"/>
<rect x="599" y="289" width="1" height="13" fill="#141414"/>
<rect x="602" y="292" width="1" height="7" fill="#141414"/>
<rect x="605" y="294" width="1" height="2" fill="#141414"/>
<text x="557" y="306.1" fill="#16165c" font-family='"Liberation Serif", serif' font-size="7" text-anchor="start" font-weight="normal" stroke="#16165c" stroke-width="0.18" letter-spacing="0.35">C7</text>
<text x="576.5" y="306.1" fill="#16165c" font-family='"Liberation Serif", serif' font-size="7" text-anchor="start" font-weight="normal" stroke="#16165c" stroke-width="0.18" letter-spacing="0.35">102</text>
<circle cx="539.5" cy="323.5" r="1.3" fill="#0c0c5a"/>
<rect x="539" y="323" width="20" height="1" fill="#0c0c5a"/>
<rect x="558" y="320" width="30" height="1" fill="#0c0c5a"/>
<rect x="558" y="326" width="30" height="1" fill="#0c0c5a"/>
<rect x="558" y="320" width="1" height="7" fill="#0c0c5a"/>
<rect x="587" y="320" width="1" height="7" fill="#0c0c5a"/>
<rect x="587" y="323" width="43" height="1" fill="#0c0c5a"/>
<text x="567" y="316.90000000000003" fill="#16165c" font-family='"Liberation Serif", serif' font-size="7" text-anchor="start" font-weight="normal" stroke="#16165c" stroke-width="0.18" letter-spacing="0.35">R9</text>
<text x="567" y="332.90000000000003" fill="#16165c" font-family='"Liberation Serif", serif' font-size="7" text-anchor="start" font-weight="normal" stroke="#16165c" stroke-width="0.18" letter-spacing="0.35">15K</text>
<text x="614.7" y="320.5" fill="#7a1a0a" font-family='"Liberation Serif", serif' font-size="7" text-anchor="start" font-weight="normal" stroke="#7a1a0a" stroke-width="0.2" stroke-opacity="0.4">IO1</text>
<circle cx="539.5" cy="356.5" r="1.3" fill="#0c0c5a"/>
<rect x="539" y="356" width="20" height="1" fill="#0c0c5a"/>
<rect x="558" y="353" width="30" height="1" fill="#0c0c5a"/>
<rect x="558" y="359" width="30" height="1" fill="#0c0c5a"/>
<rect x="558" y="353" width="1" height="7" fill="#0c0c5a"/>
<rect x="587" y="353" width="1" height="7" fill="#0c0c5a"/>
<rect x="587" y="356" width="43" height="1" fill="#0c0c5a"/>
<text x="567" y="349.90000000000003" fill="#16165c" font-family='"Liberation Serif", serif' font-size="7" text-anchor="start" font-weight="normal" stroke="#16165c" stroke-width="0.18" letter-spacing="0.35">R10</text>
<text x="567" y="365.90000000000003" fill="#16165c" font-family='"Liberation Serif", serif' font-size="7" text-anchor="start" font-weight="normal" stroke="#16165c" stroke-width="0.18" letter-spacing="0.35">24K</text>
<text x="614.7" y="353.5" fill="#7a1a0a" font-family='"Liberation Serif", serif' font-size="7" text-anchor="start" font-weight="normal" stroke="#7a1a0a" stroke-width="0.2" stroke-opacity="0.4">IO2</text>
<rect x="539" y="393" width="20" height="1" fill="#0c0c5a"/>
<rect x="558" y="390" width="30" height="1" fill="#0c0c5a"/>
<rect x="558" y="396" width="30" height="1" fill="#0c0c5a"/>
<rect x="558" y="390" width="1" height="7" fill="#0c0c5a"/>
<rect x="587" y="390" width="1" height="7" fill="#0c0c5a"/>
<rect x="587" y="393" width="43" height="1" fill="#0c0c5a"/>
<text x="567" y="387.40000000000003" fill="#16165c" font-family='"Liberation Serif", serif' font-size="7" text-anchor="start" font-weight="normal" stroke="#16165c" stroke-width="0.18" letter-spacing="0.35">R11</text>
<text x="567" y="403.40000000000003" fill="#16165c" font-family='"Liberation Serif", serif' font-size="7" text-anchor="start" font-weight="normal" stroke="#16165c" stroke-width="0.18" letter-spacing="0.35">0R</text>
<text x="614.7" y="391.0" fill="#7a1a0a" font-family='"Liberation Serif", serif' font-size="7" text-anchor="start" font-weight="normal" stroke="#7a1a0a" stroke-width="0.2" stroke-opacity="0.4">IO3</text>
<text x="680" y="216.4" fill="#7a1a0a" font-family='"Liberation Serif", serif' font-size="7" text-anchor="start" font-weight="normal" stroke="#7a1a0a" stroke-width="0.2" stroke-opacity="0.4">V3.3</text>
<rect x="681" y="219" width="10" height="1" fill="#5a1a10"/>
<rect x="686" y="219" width="1" height="8" fill="#5a1a10"/>
<rect x="686" y="226" width="1" height="22" fill="#0c0c5a"/>
<rect x="683" y="247" width="6" height="1" fill="#0c0c5a"/>
<rect x="683" y="276" width="6" height="1" fill="#0c0c5a"/>
<rect x="683" y="247" width="1" height="30" fill="#0c0c5a"/>
<rect x="688" y="247" width="1" height="30" fill="#0c0c5a"/>
<rect x="686" y="276" width="1" height="20" fill="#0c0c5a"/>
<text x="690" y="252.1" fill="#16165c" font-family='"Liberation Serif", serif' font-size="7" text-anchor="start" font-weight="normal" stroke="#16165c" stroke-width="0.18" letter-spacing="0.35">R7</text>
<text x="690" y="260.6" fill="#16165c" font-family='"Liberation Serif", serif' font-size="7" text-anchor="start" font-weight="normal" stroke="#16165c" stroke-width="0.18" letter-spacing="0.35">22K</text>
<text x="648.5" y="292.59999999999997" fill="#7a1a0a" font-family='"Liberation Serif", serif' font-size="7" text-anchor="start" font-weight="normal" stroke="#7a1a0a" stroke-width="0.2" stroke-opacity="0.4">ADKEY2</text>
<rect x="648" y="295" width="70" height="1" fill="#0c0c5a"/>
<circle cx="686.5" cy="295.5" r="1.3" fill="#0c0c5a"/>
<rect x="717" y="286" width="1" height="18" fill="#0c0c5a"/>
<rect x="720" y="286" width="1" height="18" fill="#0c0c5a"/>
<rect x="720" y="295" width="23" height="1" fill="#0c0c5a"/>
<rect x="742" y="286" width="1" height="19" fill="#141414"/>
<rect x="745" y="289" width="1" height="13" fill="#141414"/>
<rect x="748" y="292" width="1" height="7" fill="#141414"/>
<rect x="751" y="294" width="1" height="2" fill="#141414"/>
<text x="698.5" y="306.1" fill="#16165c" font-family='"Liberation Serif", serif' font-size="7" text-anchor="start" font-weight="normal" stroke="#16165c" stroke-width="0.18" letter-spacing="0.35">C8</text>
<text x="722" y="306.1" fill="#16165c" font-family='"Liberation Serif", serif' font-size="7" text-anchor="start" font-weight="normal" stroke="#16165c" stroke-width="0.18" letter-spacing="0.35">102</text>
<line x1="707" y1="305" x2="722" y2="305" stroke="#b08060" stroke-width="0.8" stroke-dasharray="1,1"/>
<text x="28" y="320.4" fill="#7a1a0a" font-family='"Liberation Serif", serif' font-size="7" text-anchor="start" font-weight="normal" stroke="#7a1a0a" stroke-width="0.2" stroke-opacity="0.4">V3.3</text>
<rect x="30" y="323" width="11" height="1" fill="#5a1a10"/>
<rect x="35" y="323" width="1" height="8" fill="#5a1a10"/>
<rect x="35" y="330" width="1" height="22" fill="#0c0c5a"/>
<rect x="32" y="351" width="7" height="1" fill="#0c0c5a"/>
<rect x="32" y="379" width="7" height="1" fill="#0c0c5a"/>
<rect x="32" y="351" width="1" height="29" fill="#0c0c5a"/>
<rect x="38" y="351" width="1" height="29" fill="#0c0c5a"/>
<rect x="35" y="379" width="1" height="51" fill="#0c0c5a"/>
<circle cx="35.5" cy="398.5" r="1.6" fill="#0c0c5a"/>
<rect x="26" y="429" width="17" height="1" fill="#0c0c5a"/>
<rect x="26" y="433" width="17" height="1" fill="#0c0c5a"/>
<rect x="35" y="433" width="1" height="23" fill="#0c0c5a"/>
<rect x="26" y="455" width="19" height="1" fill="#4a1a10"/>
<rect x="28" y="457" width="15" height="1" fill="#4a1a10"/>
<rect x="31" y="460" width="9" height="1" fill="#4a1a10"/>
<rect x="34" y="463" width="3" height="1" fill="#4a1a10"/>
<text x="39" y="356.6" fill="#16165c" font-family='"Liberation Serif", serif' font-size="7" text-anchor="start" font-weight="normal" stroke="#16165c" stroke-width="0.18" letter-spacing="0.35">R6</text>
<text x="39" y="365.1" fill="#16165c" font-family='"Liberation Serif", serif' font-size="7" text-anchor="start" font-weight="normal" stroke="#16165c" stroke-width="0.18" letter-spacing="0.35">4R7</text>
<text x="44" y="433.1" fill="#16165c" font-family='"Liberation Serif", serif' font-size="7" text-anchor="start" font-weight="normal" stroke="#16165c" stroke-width="0.18" letter-spacing="0.35">C6</text>
<text x="40.5" y="442.1" fill="#16165c" font-family='"Liberation Serif", serif' font-size="7" text-anchor="start" font-weight="normal" stroke="#16165c" stroke-width="0.18" letter-spacing="0.35">106</text>
<rect x="148" y="361" width="19" height="94" fill="#fffab4"/>
<rect x="148" y="361" width="19" height="1" fill="#4a1a08"/>
<rect x="148" y="454" width="19" height="1" fill="#4a1a08"/>
<rect x="148" y="361" width="1" height="94" fill="#4a1a08"/>
<rect x="166" y="361" width="1" height="94" fill="#4a1a08"/>
<text x="148.5" y="359.2" fill="#1a1a80" font-family='"Liberation Serif", serif' font-size="7" text-anchor="start" font-weight="normal" stroke="#1a1a80" stroke-width="0.15" >J2</text>
<rect x="77" y="370" width="72" height="1" fill="#0c0c5a"/>
<text x="155.5" y="373.3" fill="#111" font-family='"Liberation Serif", serif' font-size="7" text-anchor="middle" font-weight="normal" stroke="#111" stroke-width="0.25" >1</text>
<text x="167.2" y="373.20000000000005" fill="#16165c" font-family='"Liberation Serif", serif' font-size="7.1" text-anchor="start" font-weight="bold" stroke="#16165c" stroke-width="0.1" >DAT2</text>
<rect x="77" y="379" width="72" height="1" fill="#0c0c5a"/>
<text x="155.5" y="382.2" fill="#111" font-family='"Liberation Serif", serif' font-size="7" text-anchor="middle" font-weight="normal" stroke="#111" stroke-width="0.25" >2</text>
<text x="167.2" y="382.1" fill="#16165c" font-family='"Liberation Serif", serif' font-size="7.1" text-anchor="start" font-weight="bold" stroke="#16165c" stroke-width="0.1" >CD/DAT3</text>
<rect x="77" y="389" width="72" height="1" fill="#0c0c5a"/>
<text x="155.5" y="392.2" fill="#111" font-family='"Liberation Serif", serif' font-size="7" text-anchor="middle" font-weight="normal" stroke="#111" stroke-width="0.25" >3</text>
<text x="167.2" y="392.1" fill="#16165c" font-family='"Liberation Serif", serif' font-size="7.1" text-anchor="start" font-weight="bold" stroke="#16165c" stroke-width="0.1" >CMD</text>
<rect x="35" y="398" width="114" height="1" fill="#0c0c5a"/>
<text x="155.5" y="400.8" fill="#111" font-family='"Liberation Serif", serif' font-size="7" text-anchor="middle" font-weight="normal" stroke="#111" stroke-width="0.25" >4</text>
<text x="167.2" y="400.70000000000005" fill="#16165c" font-family='"Liberation Serif", serif' font-size="7.1" text-anchor="start" font-weight="bold" stroke="#16165c" stroke-width="0.1" >VDD</text>
<rect x="77" y="408" width="72" height="1" fill="#0c0c5a"/>
<text x="155.5" y="411.0" fill="#111" font-family='"Liberation Serif", serif' font-size="7" text-anchor="middle" font-weight="normal" stroke="#111" stroke-width="0.25" >5</text>
<text x="167.2" y="410.90000000000003" fill="#16165c" font-family='"Liberation Serif", serif' font-size="7.1" text-anchor="start" font-weight="bold" stroke="#16165c" stroke-width="0.1" >CLK</text>
<rect x="63" y="417" width="86" height="1" fill="#0c0c5a"/>
<text x="155.5" y="420.0" fill="#111" font-family='"Liberation Serif", serif' font-size="7" text-anchor="middle" font-weight="normal" stroke="#111" stroke-width="0.25" >6</text>
<text x="167.2" y="419.90000000000003" fill="#16165c" font-family='"Liberation Serif", serif' font-size="7.1" text-anchor="start" font-weight="bold" stroke="#16165c" stroke-width="0.1" >VSS</text>
<rect x="77" y="427" width="72" height="1" fill="#0c0c5a"/>
<text x="155.5" y="429.9" fill="#111" font-family='"Liberation Serif", serif' font-size="7" text-anchor="middle" font-weight="normal" stroke="#111" stroke-width="0.25" >7</text>
<text x="167.2" y="429.8" fill="#16165c" font-family='"Liberation Serif", serif' font-size="7.1" text-anchor="start" font-weight="bold" stroke="#16165c" stroke-width="0.1" >DAT0</text>
<rect x="88" y="436" width="61" height="1" fill="#0c0c5a"/>
<text x="155.5" y="439.2" fill="#111" font-family='"Liberation Serif", serif' font-size="7" text-anchor="middle" font-weight="normal" stroke="#111" stroke-width="0.25" >8</text>
<text x="167.2" y="439.1" fill="#16165c" font-family='"Liberation Serif", serif' font-size="7.1" text-anchor="start" font-weight="bold" stroke="#16165c" stroke-width="0.1" >DAT1</text>
<rect x="88" y="445" width="61" height="1" fill="#0c0c5a"/>
<text x="155.5" y="448.3" fill="#111" font-family='"Liberation Serif", serif' font-size="7" text-anchor="middle" font-weight="normal" stroke="#111" stroke-width="0.25" >9</text>
<text x="167.2" y="448.20000000000005" fill="#16165c" font-family='"Liberation Serif", serif' font-size="7.1" text-anchor="start" font-weight="bold" stroke="#16165c" stroke-width="0.1" >CD</text>
<rect x="63" y="417" width="1" height="20" fill="#0c0c5a"/>
<rect x="54" y="436" width="19" height="1" fill="#4a1a10"/>
<rect x="56" y="438" width="15" height="1" fill="#4a1a10"/>
<rect x="59" y="441" width="9" height="1" fill="#4a1a10"/>
<rect x="62" y="444" width="3" height="1" fill="#4a1a10"/>
<text x="87.3" y="385.9" fill="#7a1a0a" font-family='"Liberation Serif", serif' font-size="7" text-anchor="start" font-weight="normal" stroke="#7a1a0a" stroke-width="0.2" stroke-opacity="0.4">SDCMD</text>
<text x="87.3" y="404.7" fill="#7a1a0a" font-family='"Liberation Serif", serif' font-size="7" text-anchor="start" font-weight="normal" stroke="#7a1a0a" stroke-width="0.2" stroke-opacity="0.4">SDCLK</text>
<text x="87.3" y="424.4" fill="#7a1a0a" font-family='"Liberation Serif", serif' font-size="7" text-anchor="start" font-weight="normal" stroke="#7a1a0a" stroke-width="0.2" stroke-opacity="0.4">SDDAT</text>
<text x="143.5" y="462" fill="#1a1a80" font-family='"Liberation Serif", serif' font-size="6.6" text-anchor="start" font-weight="normal" stroke="#1a1a80" stroke-width="0.2" >SD Card</text>
<text x="107.5" y="485.6" fill="#16165e" font-family='"Liberation Serif", serif' font-size="13.6" text-anchor="start" font-weight="bold" stroke="#16165e" stroke-width="0" >TF Card</text>
<rect x="304" y="346" width="75" height="151" fill="#fffab4"/>
<rect x="304" y="346" width="75" height="1" fill="#4a1a08"/>
<rect x="304" y="496" width="75" height="1" fill="#4a1a08"/>
<rect x="304" y="346" width="1" height="151" fill="#4a1a08"/>
<rect x="378" y="346" width="1" height="151" fill="#4a1a08"/>
<text x="304.5" y="344.2" fill="#1a1a80" font-family='"Liberation Serif", serif' font-size="7" text-anchor="start" font-weight="normal" stroke="#1a1a80" stroke-width="0.15" >U3A</text>
<text x="310" y="359.1" fill="#111" font-family='"Liberation Serif", serif' font-size="7" text-anchor="start" font-weight="normal" stroke="#111" stroke-width="0.3" >VCC</text>
<text x="373" y="359.1" fill="#111" font-family='"Liberation Serif", serif' font-size="7" text-anchor="end" font-weight="normal" stroke="#111" stroke-width="0.3" >BUSY</text>
<text x="296" y="353.8" fill="#111" font-family='"Liberation Serif", serif' font-size="6.5" text-anchor="end" font-weight="normal" stroke="#111" stroke-width="0.25" >1</text>
<text x="387" y="353.8" fill="#111" font-family='"Liberation Serif", serif' font-size="6.5" text-anchor="start" font-weight="normal" stroke="#111" stroke-width="0.25" letter-spacing="0.3">16</text>
<rect x="244" y="356" width="61" height="1" fill="#0c0c5a"/>
<rect x="378" y="356" width="48" height="1" fill="#0c0c5a"/>
<text x="257" y="353.7" fill="#7a1a0a" font-family='"Liberation Serif", serif' font-size="7" text-anchor="start" font-weight="normal" stroke="#7a1a0a" stroke-width="0.2" stroke-opacity="0.4">VCC</text>
<text x="403" y="353.7" fill="#7a1a0a" font-family='"Liberation Serif", serif' font-size="7" text-anchor="start" font-weight="normal" stroke="#7a1a0a" stroke-width="0.2" stroke-opacity="0.4">GPIOA1</text>
<text x="310" y="377.93" fill="#111" font-family='"Liberation Serif", serif' font-size="7" text-anchor="start" font-weight="normal" stroke="#111" stroke-width="0.3" >RX</text>
<text x="373" y="377.93" fill="#111" font-family='"Liberation Serif", serif' font-size="7" text-anchor="end" font-weight="normal" stroke="#111" stroke-width="0.3" >USB-</text>
<text x="296" y="372.63" fill="#111" font-family='"Liberation Serif", serif' font-size="6.5" text-anchor="end" font-weight="normal" stroke="#111" stroke-width="0.25" >2</text>
<text x="387" y="372.63" fill="#111" font-family='"Liberation Serif", serif' font-size="6.5" text-anchor="start" font-weight="normal" stroke="#111" stroke-width="0.25" letter-spacing="0.3">15</text>
<rect x="257" y="375" width="48" height="1" fill="#0c0c5a"/>
<rect x="378" y="375" width="48" height="1" fill="#0c0c5a"/>
<text x="257" y="372.53" fill="#7a1a0a" font-family='"Liberation Serif", serif' font-size="7" text-anchor="start" font-weight="normal" stroke="#7a1a0a" stroke-width="0.2" stroke-opacity="0.4">RX</text>
<text x="407" y="372.53" fill="#7a1a0a" font-family='"Liberation Serif", serif' font-size="7" text-anchor="start" font-weight="normal" stroke="#7a1a0a" stroke-width="0.2" stroke-opacity="0.4">USB-</text>
<text x="310" y="396.76" fill="#111" font-family='"Liberation Serif", serif' font-size="7" text-anchor="start" font-weight="normal" stroke="#111" stroke-width="0.3" >TX</text>
<text x="373" y="396.76" fill="#111" font-family='"Liberation Serif", serif' font-size="7" text-anchor="end" font-weight="normal" stroke="#111" stroke-width="0.3" >USB+</text>
<text x="296" y="391.46" fill="#111" font-family='"Liberation Serif", serif' font-size="6.5" text-anchor="end" font-weight="normal" stroke="#111" stroke-width="0.25" >3</text>
<text x="387" y="391.46" fill="#111" font-family='"Liberation Serif", serif' font-size="6.5" text-anchor="start" font-weight="normal" stroke="#111" stroke-width="0.25" letter-spacing="0.3">14</text>
<rect x="257" y="394" width="48" height="1" fill="#0c0c5a"/>
<rect x="378" y="394" width="48" height="1" fill="#0c0c5a"/>
<text x="257" y="391.35999999999996" fill="#7a1a0a" font-family='"Liberation Serif", serif' font-size="7" text-anchor="start" font-weight="normal" stroke="#7a1a0a" stroke-width="0.2" stroke-opacity="0.4">TX</text>
<text x="407" y="391.35999999999996" fill="#7a1a0a" font-family='"Liberation Serif", serif' font-size="7" text-anchor="start" font-weight="normal" stroke="#7a1a0a" stroke-width="0.2" stroke-opacity="0.4">USB+</text>
<text x="310" y="415.59000000000003" fill="#111" font-family='"Liberation Serif", serif' font-size="7" text-anchor="start" font-weight="normal" stroke="#111" stroke-width="0.3" >DAC_R</text>
<text x="373" y="415.59000000000003" fill="#111" font-family='"Liberation Serif", serif' font-size="7" text-anchor="end" font-weight="normal" stroke="#111" stroke-width="0.3" >ADKEY2</text>
<text x="296" y="410.29" fill="#111" font-family='"Liberation Serif", serif' font-size="6.5" text-anchor="end" font-weight="normal" stroke="#111" stroke-width="0.25" >4</text>
<text x="387" y="410.29" fill="#111" font-family='"Liberation Serif", serif' font-size="6.5" text-anchor="start" font-weight="normal" stroke="#111" stroke-width="0.25" letter-spacing="0.3">13</text>
<rect x="257" y="412" width="48" height="1" fill="#0c0c5a"/>
<rect x="378" y="412" width="48" height="1" fill="#0c0c5a"/>
<text x="257" y="410.19" fill="#7a1a0a" font-family='"Liberation Serif", serif' font-size="7" text-anchor="start" font-weight="normal" stroke="#7a1a0a" stroke-width="0.2" stroke-opacity="0.4">DAC_R</text>
<text x="407" y="410.19" fill="#7a1a0a" font-family='"Liberation Serif", serif' font-size="7" text-anchor="start" font-weight="normal" stroke="#7a1a0a" stroke-width="0.2" stroke-opacity="0.4">ADKEY2</text>
<text x="310" y="434.42" fill="#111" font-family='"Liberation Serif", serif' font-size="7" text-anchor="start" font-weight="normal" stroke="#111" stroke-width="0.3" >DAC_L</text>
<text x="373" y="434.42" fill="#111" font-family='"Liberation Serif", serif' font-size="7" text-anchor="end" font-weight="normal" stroke="#111" stroke-width="0.3" >ADKEY1</text>
<text x="296" y="429.12" fill="#111" font-family='"Liberation Serif", serif' font-size="6.5" text-anchor="end" font-weight="normal" stroke="#111" stroke-width="0.25" >5</text>
<text x="387" y="429.12" fill="#111" font-family='"Liberation Serif", serif' font-size="6.5" text-anchor="start" font-weight="normal" stroke="#111" stroke-width="0.25" letter-spacing="0.3">12</text>
<rect x="257" y="431" width="48" height="1" fill="#0c0c5a"/>
<rect x="378" y="431" width="48" height="1" fill="#0c0c5a"/>
<text x="257" y="429.02" fill="#7a1a0a" font-family='"Liberation Serif", serif' font-size="7" text-anchor="start" font-weight="normal" stroke="#7a1a0a" stroke-width="0.2" stroke-opacity="0.4">DAC_L</text>
<text x="407" y="429.02" fill="#7a1a0a" font-family='"Liberation Serif", serif' font-size="7" text-anchor="start" font-weight="normal" stroke="#7a1a0a" stroke-width="0.2" stroke-opacity="0.4">IO3</text>
<text x="310" y="453.25" fill="#111" font-family='"Liberation Serif", serif' font-size="7" text-anchor="start" font-weight="normal" stroke="#111" stroke-width="0.3" >SPK1</text>
<text x="373" y="453.25" fill="#111" font-family='"Liberation Serif", serif' font-size="7" text-anchor="end" font-weight="normal" stroke="#111" stroke-width="0.3" >IO2</text>
<text x="296" y="447.95" fill="#111" font-family='"Liberation Serif", serif' font-size="6.5" text-anchor="end" font-weight="normal" stroke="#111" stroke-width="0.25" >6</text>
<text x="387" y="447.95" fill="#111" font-family='"Liberation Serif", serif' font-size="6.5" text-anchor="start" font-weight="normal" stroke="#111" stroke-width="0.25" letter-spacing="0.3">11</text>
<rect x="257" y="450" width="48" height="1" fill="#0c0c5a"/>
<rect x="378" y="450" width="48" height="1" fill="#0c0c5a"/>
<text x="257" y="447.84999999999997" fill="#7a1a0a" font-family='"Liberation Serif", serif' font-size="7" text-anchor="start" font-weight="normal" stroke="#7a1a0a" stroke-width="0.2" stroke-opacity="0.4">SPK2</text>
<text x="407" y="447.84999999999997" fill="#7a1a0a" font-family='"Liberation Serif", serif' font-size="7" text-anchor="start" font-weight="normal" stroke="#7a1a0a" stroke-width="0.2" stroke-opacity="0.4">IO2</text>
<text x="310" y="472.08000000000004" fill="#111" font-family='"Liberation Serif", serif' font-size="7" text-anchor="start" font-weight="normal" stroke="#111" stroke-width="0.3" >GND</text>
<text x="373" y="472.08000000000004" fill="#111" font-family='"Liberation Serif", serif' font-size="7" text-anchor="end" font-weight="normal" stroke="#111" stroke-width="0.3" >GND</text>
<text x="296" y="466.78000000000003" fill="#111" font-family='"Liberation Serif", serif' font-size="6.5" text-anchor="end" font-weight="normal" stroke="#111" stroke-width="0.25" >7</text>
<text x="387" y="466.78000000000003" fill="#111" font-family='"Liberation Serif", serif' font-size="6.5" text-anchor="start" font-weight="normal" stroke="#111" stroke-width="0.25" letter-spacing="0.3">10</text>
<rect x="247" y="469" width="58" height="1" fill="#0c0c5a"/>
<rect x="247" y="460" width="1" height="19" fill="#4a1a10"/>
<rect x="244" y="463" width="1" height="13" fill="#4a1a10"/>
<rect x="241" y="466" width="1" height="7" fill="#4a1a10"/>
<rect x="238" y="468" width="1" height="2" fill="#4a1a10"/>
<rect x="378" y="469" width="59" height="1" fill="#5a1a10"/>
<rect x="436" y="460" width="1" height="19" fill="#4a1a10"/>
<rect x="439" y="463" width="1" height="13" fill="#4a1a10"/>
<rect x="442" y="466" width="1" height="7" fill="#4a1a10"/>
<rect x="445" y="468" width="1" height="2" fill="#4a1a10"/>
<text x="257" y="466.68" fill="#7a1a0a" font-family='"Liberation Serif", serif' font-size="7" text-anchor="start" font-weight="normal" stroke="#7a1a0a" stroke-width="0.2" stroke-opacity="0.4">GND</text>
<text x="407" y="466.68" fill="#7a1a0a" font-family='"Liberation Serif", serif' font-size="7" text-anchor="start" font-weight="normal" stroke="#7a1a0a" stroke-width="0.2" stroke-opacity="0.4">GND</text>
<text x="310" y="490.91" fill="#111" font-family='"Liberation Serif", serif' font-size="7" text-anchor="start" font-weight="normal" stroke="#111" stroke-width="0.3" >SPK2</text>
<text x="373" y="490.91" fill="#111" font-family='"Liberation Serif", serif' font-size="7" text-anchor="end" font-weight="normal" stroke="#111" stroke-width="0.3" >IO1</text>
<text x="296" y="485.61" fill="#111" font-family='"Liberation Serif", serif' font-size="6.5" text-anchor="end" font-weight="normal" stroke="#111" stroke-width="0.25" >8</text>
<text x="387" y="485.61" fill="#111" font-family='"Liberation Serif", serif' font-size="6.5" text-anchor="start" font-weight="normal" stroke="#111" stroke-width="0.25" letter-spacing="0.3">9</text>
<rect x="257" y="488" width="48" height="1" fill="#0c0c5a"/>
<rect x="378" y="488" width="48" height="1" fill="#0c0c5a"/>
<text x="257" y="485.51" fill="#7a1a0a" font-family='"Liberation Serif", serif' font-size="7" text-anchor="start" font-weight="normal" stroke="#7a1a0a" stroke-width="0.2" stroke-opacity="0.4">SPK1</text>
<text x="407" y="485.51" fill="#7a1a0a" font-family='"Liberation Serif", serif' font-size="7" text-anchor="start" font-weight="normal" stroke="#7a1a0a" stroke-width="0.2" stroke-opacity="0.4">IO1</text>
<rect x="219" y="356" width="23" height="1" fill="#5a1a10"/>
<rect x="219" y="347" width="1" height="19" fill="#4a1a10"/>
<rect x="216" y="350" width="1" height="13" fill="#4a1a10"/>
<rect x="213" y="353" width="1" height="7" fill="#4a1a10"/>
<rect x="210" y="355" width="1" height="2" fill="#4a1a10"/>
<rect x="241" y="347" width="1" height="17" fill="#0c0c5a"/>
<rect x="244" y="347" width="1" height="17" fill="#0c0c5a"/>
<text x="237" y="344.1" fill="#16165c" font-family='"Liberation Serif", serif' font-size="7" text-anchor="start" font-weight="normal" stroke="#16165c" stroke-width="0.18" letter-spacing="0.35">C14</text>
<text x="237.5" y="370.6" fill="#16165c" font-family='"Liberation Serif", serif' font-size="7" text-anchor="start" font-weight="normal" stroke="#16165c" stroke-width="0.18" letter-spacing="0.35">105</text>
<text x="308" y="505" fill="#1a1a80" font-family='"Liberation Serif", serif' font-size="6.8" text-anchor="start" font-weight="normal" stroke="#1a1a80" stroke-width="0.2" letter-spacing="0.35">MP3-TF-16P</text>
<line x1="347.5" y1="501.5" x2="351" y2="501.5" stroke="#1a1a80" stroke-width="0.9"/>
<line x1="349.3" y1="499.5" x2="349.3" y2="506.5" stroke="#1a1a80" stroke-width="0.9"/>
<line x1="349.3" y1="502" x2="347.5" y2="505" stroke="#1a1a80" stroke-width="0.9"/>
<line x1="349.3" y1="502" x2="351" y2="504" stroke="#1a1a80" stroke-width="0.9"/>
<line x1="351.5" y1="500.5" x2="355" y2="500.5" stroke="#1a1a80" stroke-width="0.9"/>
<line x1="352.5" y1="499.5" x2="352.5" y2="501.5" stroke="#1a1a80" stroke-width="0.9"/>
<line x1="354" y1="499.5" x2="354" y2="501.5" stroke="#1a1a80" stroke-width="0.9"/>
<line x1="352" y1="502" x2="354.5" y2="502" stroke="#1a1a80" stroke-width="0.9"/>
<line x1="352" y1="503.2" x2="354.5" y2="503.2" stroke="#1a1a80" stroke-width="0.9"/>
<line x1="352" y1="502" x2="352" y2="503.5" stroke="#1a1a80" stroke-width="0.9"/>
<line x1="354.5" y1="502" x2="354.5" y2="503.5" stroke="#1a1a80" stroke-width="0.9"/>
<line x1="351.5" y1="504.5" x2="355" y2="504.5" stroke="#1a1a80" stroke-width="0.9"/>
<line x1="353.3" y1="503.5" x2="351.5" y2="506.5" stroke="#1a1a80" stroke-width="0.9"/>
<line x1="353.3" y1="504.5" x2="355.2" y2="506.5" stroke="#1a1a80" stroke-width="0.9"/>
<line x1="356.5" y1="502" x2="359" y2="502" stroke="#1a1a80" stroke-width="0.9"/>
<line x1="357.7" y1="500" x2="357.7" y2="505.5" stroke="#1a1a80" stroke-width="0.9"/>
<line x1="356.3" y1="505.8" x2="359" y2="504.8" stroke="#1a1a80" stroke-width="0.9"/>
<line x1="359.5" y1="501.5" x2="362" y2="501.5" stroke="#1a1a80" stroke-width="0.9"/>
<line x1="360.8" y1="499.5" x2="360.8" y2="503.5" stroke="#1a1a80" stroke-width="0.9"/>
<line x1="359.2" y1="503.5" x2="362.5" y2="503.5" stroke="#1a1a80" stroke-width="0.9"/>
<line x1="360.8" y1="503.5" x2="359.2" y2="506.5" stroke="#1a1a80" stroke-width="0.9"/>
<line x1="360.8" y1="503.5" x2="362.5" y2="506.5" stroke="#1a1a80" stroke-width="0.9"/>
<rect x="671" y="469" width="216" height="1" fill="#111"/>
<rect x="671" y="469" width="1" height="72" fill="#111"/>
<rect x="671" y="497" width="216" height="1" fill="#111"/>
<rect x="671" y="526" width="216" height="1" fill="#111"/>
<rect x="671" y="535" width="216" height="1" fill="#111"/>
<rect x="719" y="497" width="1" height="30" fill="#111"/>
<rect x="860" y="526" width="1" height="15" fill="#111"/>
<text x="676.5" y="475.5" fill="#111" font-family='"Liberation Serif", serif' font-size="7" text-anchor="start" font-weight="normal" stroke="#111" stroke-width="0.12" letter-spacing="0">Title</text>
<text x="676.5" y="503.5" fill="#111" font-family='"Liberation Serif", serif' font-size="7" text-anchor="start" font-weight="normal" stroke="#111" stroke-width="0.12" letter-spacing="0">Size</text>
<text x="681.5" y="517.5" fill="#111" font-family='"Liberation Serif", serif' font-size="7" text-anchor="start" font-weight="normal" stroke="#111" stroke-width="0.12" letter-spacing="0">A4</text>
<text x="723" y="503.5" fill="#111" font-family='"Liberation Serif", serif' font-size="7" text-anchor="start" font-weight="normal" stroke="#111" stroke-width="0.12" letter-spacing="0">Number</text>
<text x="676.5" y="532.5" fill="#111" font-family='"Liberation Serif", serif' font-size="7" text-anchor="start" font-weight="normal" stroke="#111" stroke-width="0.12" letter-spacing="0">Date:</text>
<text x="719" y="532.5" fill="#111" font-family='"Liberation Serif", serif' font-size="7" text-anchor="start" font-weight="normal" stroke="#111" stroke-width="0.12" letter-spacing="0.35">2013/10/26</text>
<text x="864.5" y="532.5" fill="#111" font-family='"Liberation Serif", serif' font-size="7" text-anchor="start" font-weight="normal" stroke="#111" stroke-width="0.12" letter-spacing="0">Sheet</text>
<text x="676.5" y="541.5" fill="#111" font-family='"Liberation Serif", serif' font-size="7" text-anchor="start" font-weight="normal" stroke="#111" stroke-width="0.12" letter-spacing="0">File:</text>
<text x="719" y="541.5" fill="#111" font-family='"Liberation Serif", serif' font-size="7" text-anchor="start" font-weight="normal" stroke="#111" stroke-width="0.12" letter-spacing="0.35">D:\Desktop\MP3-TF-16P\V1.3.SCH</text>
<text x="864.5" y="541.5" fill="#111" font-family='"Liberation Serif", serif' font-size="7" text-anchor="start" font-weight="normal" stroke="#111" stroke-width="0.12" letter-spacing="0">Drawn</text>
<rect x="887" y="0" width="1" height="541" fill="#8a8a8a"/>
<rect x="888" y="0" width="1" height="540" fill="#ffffff"/>
</svg></body></html>
